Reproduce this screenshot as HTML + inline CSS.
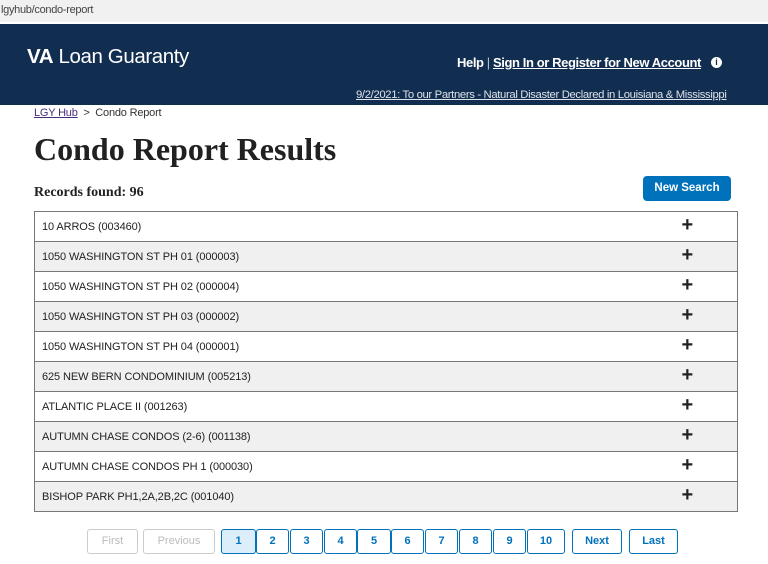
<!DOCTYPE html>
<html><head><style>
*{margin:0;padding:0;box-sizing:border-box}
body{width:768px;height:564px;overflow:hidden;background:#fff;font-family:"Liberation Sans",sans-serif;position:relative}
.url{position:absolute;left:0;top:0;width:768px;height:22px;background:#f1f1f1;font-size:11px;color:#444;padding:4px 0 0 1px;letter-spacing:-0.3px}
.hdr{position:absolute;left:0;top:24px;width:768px;height:81px;background:#112e51;color:#fff}
.logo{position:absolute;left:27px;top:21px;font-size:20.5px;letter-spacing:-0.4px}
.logo b{font-weight:bold}
.nav{position:absolute;left:457px;top:31px;font-size:13px;font-weight:bold;letter-spacing:-0.4px}
.info{position:absolute;left:711px;top:33px;width:11px;height:11px;border-radius:50%;background:#fff;color:#112e51;font-size:9px;font-weight:bold;text-align:center;line-height:11px}
.alert{position:absolute;left:356px;top:65px;font-size:11.3px;text-decoration:underline;color:#dfe3e8;letter-spacing:-0.35px}
.bc{position:absolute;left:34px;top:107px;font-size:11px;color:#333;letter-spacing:-0.2px}
.bc a{color:#4a2d7a;text-decoration:underline}
h1{position:absolute;left:34px;top:131px;font-family:"Liberation Serif",serif;font-size:32px;font-weight:bold;color:#212121;letter-spacing:0px}
.rec{position:absolute;left:34px;top:185px;font-family:"Liberation Serif",serif;font-size:14px;font-weight:bold;color:#212121}
.ns{position:absolute;left:643px;top:176px;width:88px;height:25px;background:#0071bb;border-radius:4px;color:#fff;font-size:11.5px;font-weight:bold;text-align:center;line-height:25px}
table{position:absolute;left:34px;top:211px;width:704px;border-collapse:collapse}
td{border:1px solid #777;height:30px;font-size:11px;color:#222;padding-left:7px;letter-spacing:-0.1px}
tr td:first-child{border-right:none}
tr td:last-child{border-left:none;width:100px;text-align:center;font-size:20px;font-weight:bold;padding:0 0 2px 0}
tr:nth-child(even) td{background:#f0f0f0}
.pg{position:absolute;top:529px;height:25px;border:1.5px solid #0071bb;border-radius:3px;color:#0071bb;font-size:11px;font-weight:bold;text-align:center;line-height:22px}
.pg.d{border:1px solid #ccc;color:#bbb;font-weight:normal}
.pg.a{background:#dbeefa}
</style></head><body>
<div class="url">lgyhub/condo-report</div>
<div class="hdr">
<div class="logo"><b>VA</b> Loan Guaranty</div>
<div class="nav">Help <span style="font-weight:normal;opacity:.7">|</span> <u>Sign In or Register for New Account</u></div>
<div class="info">i</div>
<div class="alert">9/2/2021: To our Partners - Natural Disaster Declared in Louisiana &amp; Mississippi</div>
</div>
<div class="bc"><a>LGY Hub</a> &nbsp;&gt;&nbsp; Condo Report</div>
<h1>Condo Report Results</h1>
<div class="rec">Records found: 96</div>
<div class="ns">New Search</div>
<table>
<tr><td>10 ARROS (003460)</td><td>+</td></tr>
<tr><td>1050 WASHINGTON ST PH 01 (000003)</td><td>+</td></tr>
<tr><td>1050 WASHINGTON ST PH 02 (000004)</td><td>+</td></tr>
<tr><td>1050 WASHINGTON ST PH 03 (000002)</td><td>+</td></tr>
<tr><td>1050 WASHINGTON ST PH 04 (000001)</td><td>+</td></tr>
<tr><td>625 NEW BERN CONDOMINIUM (005213)</td><td>+</td></tr>
<tr><td>ATLANTIC PLACE II (001263)</td><td>+</td></tr>
<tr><td>AUTUMN CHASE CONDOS (2-6) (001138)</td><td>+</td></tr>
<tr><td>AUTUMN CHASE CONDOS PH 1 (000030)</td><td>+</td></tr>
<tr><td>BISHOP PARK PH1,2A,2B,2C (001040)</td><td>+</td></tr>
</table>
<div class="pg d" style="left:87px;width:51px">First</div>
<div class="pg d" style="left:143px;width:72px">Previous</div>
<div class="pg a" style="left:221px;width:35px">1</div>
<div class="pg" style="left:256px;width:33px">2</div>
<div class="pg" style="left:290px;width:33px">3</div>
<div class="pg" style="left:324px;width:33px">4</div>
<div class="pg" style="left:357px;width:34px">5</div>
<div class="pg" style="left:391px;width:33px">6</div>
<div class="pg" style="left:425px;width:33px">7</div>
<div class="pg" style="left:459px;width:33px">8</div>
<div class="pg" style="left:493px;width:33px">9</div>
<div class="pg" style="left:527px;width:38px">10</div>
<div class="pg" style="left:572px;width:50px">Next</div>
<div class="pg" style="left:629px;width:49px">Last</div>
</body></html>
